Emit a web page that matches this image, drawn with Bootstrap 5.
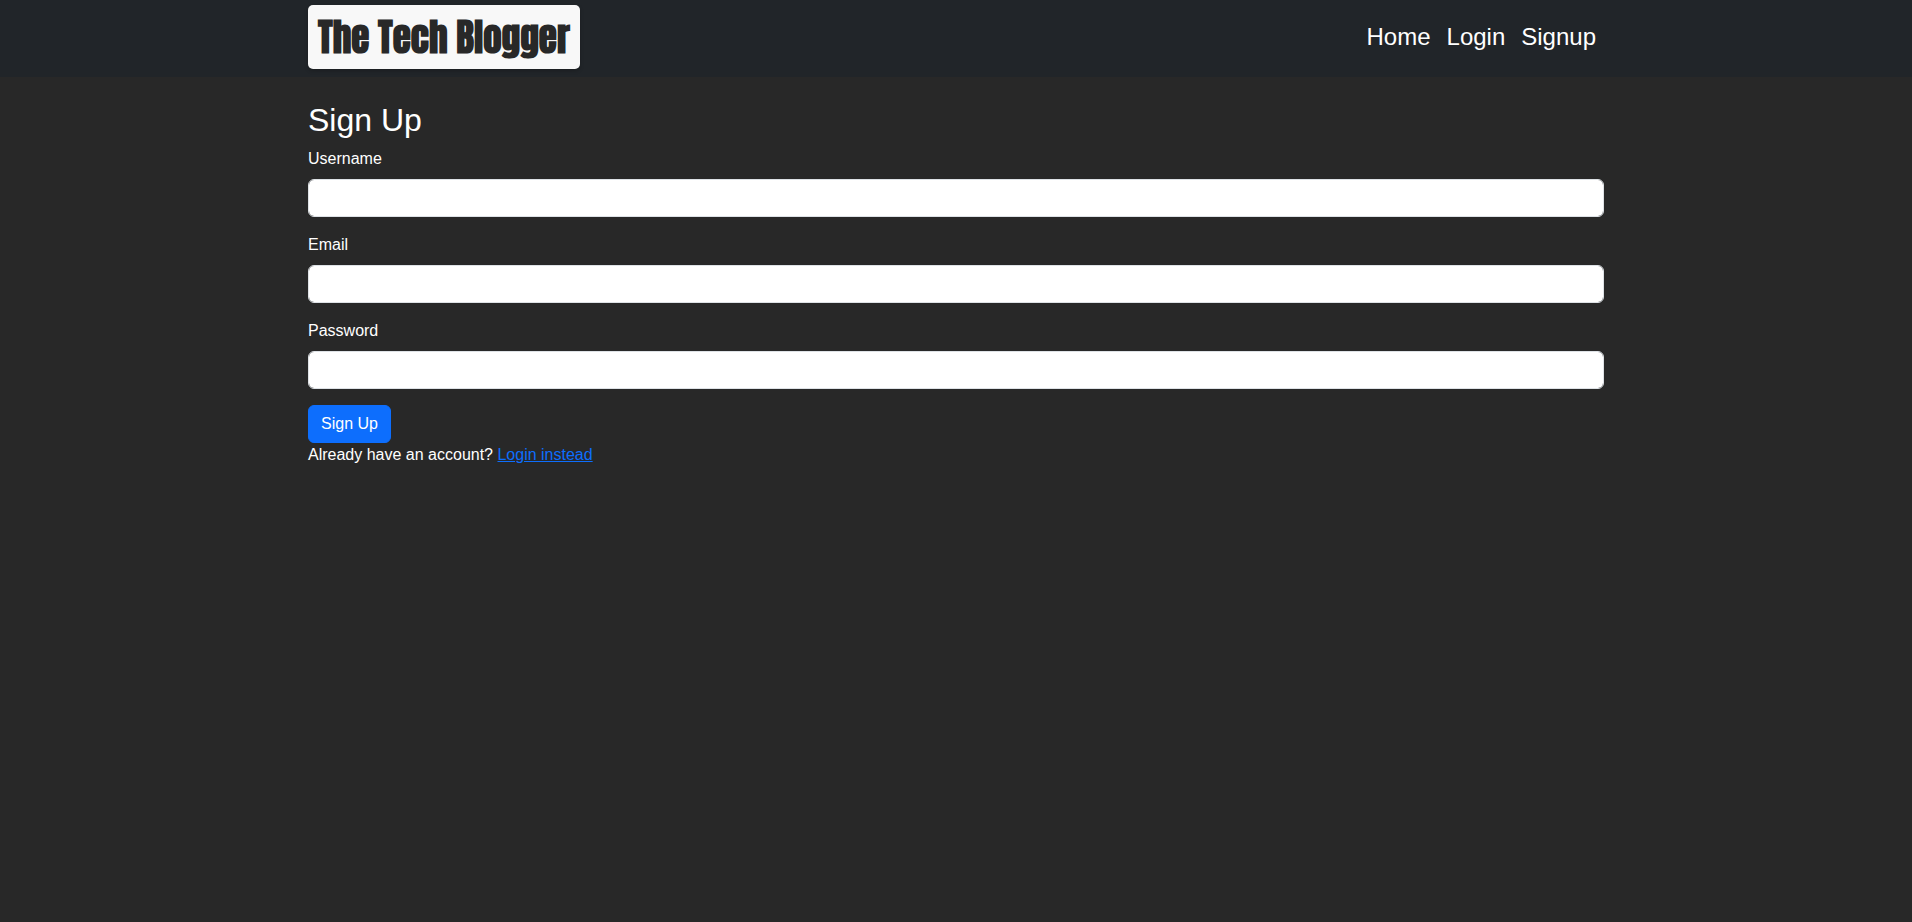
<!DOCTYPE html>
<html lang="en">
<head>
<meta charset="utf-8">
<meta name="viewport" content="width=device-width, initial-scale=1">
<title>The Tech Blogger</title>
<link href="https://cdn.jsdelivr.net/npm/bootstrap@5.3.0/dist/css/bootstrap.min.css" rel="stylesheet">
<style>
body { background: #282828; color: #fff; font-family: "Liberation Sans", Arial, sans-serif; }
.site-nav { padding: 5px 0 8px; }
.site-brand { font-family: Impact, Anton, "Open Sans", sans-serif; font-size: 37px; line-height: 54px; font-weight: 700; color: #282828; background: #f8f8f8; padding: 5px 10px; border-radius: 5px; box-shadow: 0 2px 4px rgba(0, 0, 0, .2); }
.site-brand:hover { color: #282828; }
.site-nav .nav-link { font-size: 24px; color: #fff; }
a { color: #0d6efd; }
</style>
</head>
<body>
<nav class="navbar navbar-expand-lg navbar-dark bg-dark site-nav">
  <div class="container">
    <a class="navbar-brand site-brand" href="#">The Tech Blogger</a>
    <div class="navbar-nav ms-auto">
      <a class="nav-link" href="#">Home</a>
      <a class="nav-link" href="#">Login</a>
      <a class="nav-link" href="#">Signup</a>
    </div>
  </div>
</nav>
<main class="container mt-4">
  <h2>Sign Up</h2>
  <form>
    <div class="mb-3">
      <label for="username" class="form-label">Username</label>
      <input type="text" class="form-control" id="username">
    </div>
    <div class="mb-3">
      <label for="email" class="form-label">Email</label>
      <input type="email" class="form-control" id="email">
    </div>
    <div class="mb-3">
      <label for="password" class="form-label">Password</label>
      <input type="password" class="form-control" id="password">
    </div>
    <button type="submit" class="btn btn-primary">Sign Up</button>
  </form>
  <p>Already have an account? <a href="#">Login instead</a></p>
</main>
<script src="https://cdn.jsdelivr.net/npm/bootstrap@5.3.0/dist/js/bootstrap.bundle.min.js"></script>
</body>
</html>
